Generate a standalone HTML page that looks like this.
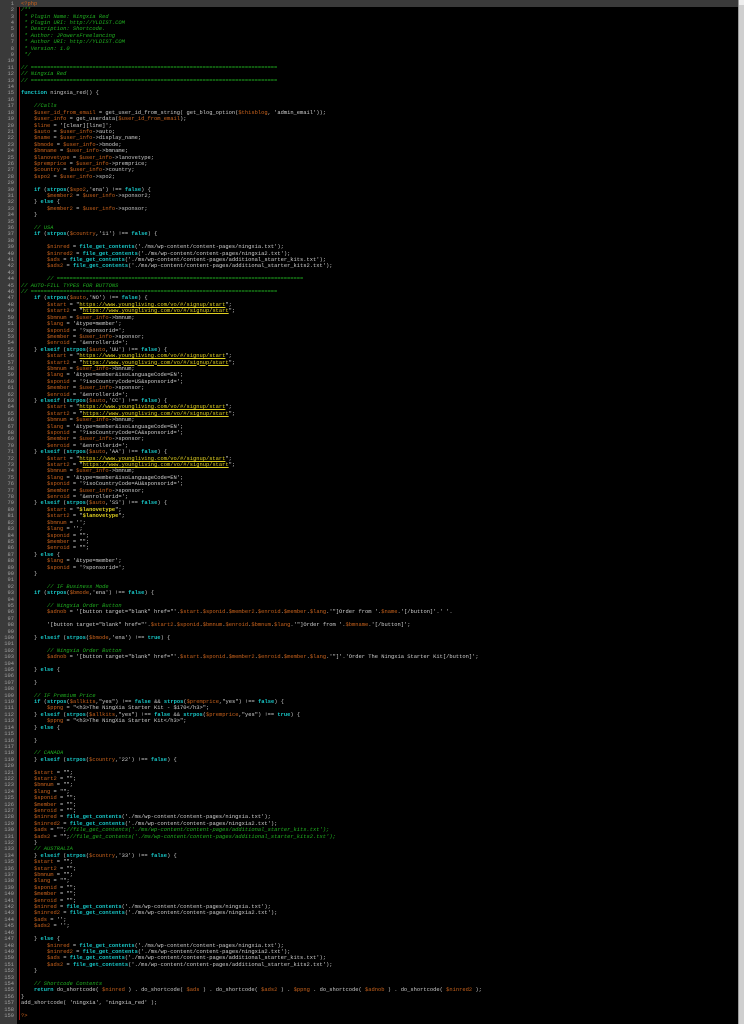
<!DOCTYPE html>
<html><head><meta charset="utf-8"><style>
html,body{margin:0;padding:0;background:#000;width:744px;height:1024px;overflow:hidden}
#g{position:absolute;left:0;top:0;width:17px;height:1024px;background:#3a3a3a}
#hl{position:absolute;left:0;top:0;width:738px;height:7px;background:#3a3a3a}
#red{position:absolute;left:19px;top:7px;width:1px;height:1013px;background:#a01010}
#sb{position:absolute;left:738px;top:0;width:6px;height:1024px;background:#cfcfcf;border-left:1px solid #999;box-sizing:border-box}
#sbt{position:absolute;left:739px;top:0;width:5px;height:5px;background:#eee}
pre{position:absolute;margin:0;font-family:"Liberation Mono",monospace;font-size:5.42px;line-height:6.4px;top:0.8px}
#n{left:0;width:14px;text-align:right;color:#a0a0a0}
#t{left:21px;color:#c8c8c8}
.v{color:#c8621c}.k{color:#18c8c8;font-weight:bold}.s{color:#d0d0d0}.u{color:#e0d020;text-decoration:underline}.c{color:#20b020;font-style:italic}.h{color:#c8621c}
</style></head><body>
<div id="g"></div><div id="hl"></div><div id="red"></div><div id="sb"></div><div id="sbt"></div>
<pre id="n">1
2
3
4
5
6
7
8
9
10
11
12
13
14
15
16
17
18
19
20
21
22
23
24
25
26
27
28
29
30
31
32
33
34
35
36
37
38
39
40
41
42
43
44
45
46
47
48
49
50
51
52
53
54
55
56
57
58
59
60
61
62
63
64
65
66
67
68
69
70
71
72
73
74
75
76
77
78
79
80
81
82
83
84
85
86
87
88
89
90
91
92
93
94
95
96
97
98
99
100
101
102
103
104
105
106
107
108
109
110
111
112
113
114
115
116
117
118
119
120
121
122
123
124
125
126
127
128
129
130
131
132
133
134
135
136
137
138
139
140
141
142
143
144
145
146
147
148
149
150
151
152
153
154
155
156
157
158
159</pre>
<pre id="t"><span class="h">&lt;?php</span>
<span class="c">/**
 * Plugin Name: Ningxia Red
 * Plugin URI: http://YLDIST.COM
 * Description: Shortcode.
 * Author: JPowersFreelancing
 * Author URI: http://YLDIST.COM
 * Version: 1.0
 */</span>

<span class="c">// ============================================================================</span>
<span class="c">// Ningxia Red</span>
<span class="c">// ============================================================================</span>

<span class="k">function</span> ningxia_red() {

    <span class="c">//Calls</span>
    <span class="v">$user_id_from_email</span> = get_user_id_from_string( get_blog_option(<span class="v">$thisblog</span>, <span class="s">'admin_email'</span>));
    <span class="v">$user_info</span> = get_userdata(<span class="v">$user_id_from_email</span>);
    <span class="v">$line</span> = <span class="s">'[clear][line]'</span>;
    <span class="v">$auto</span> = <span class="v">$user_info</span>-&gt;auto;
    <span class="v">$name</span> = <span class="v">$user_info</span>-&gt;display_name;
    <span class="v">$bmode</span> = <span class="v">$user_info</span>-&gt;bmode;
    <span class="v">$bmname</span> = <span class="v">$user_info</span>-&gt;bmname;
    <span class="v">$lanovetype</span> = <span class="v">$user_info</span>-&gt;lanovetype;
    <span class="v">$premprice</span> = <span class="v">$user_info</span>-&gt;premprice;
    <span class="v">$country</span> = <span class="v">$user_info</span>-&gt;country;
    <span class="v">$spo2</span> = <span class="v">$user_info</span>-&gt;spo2;

    <span class="k">if</span> (<span class="k">strpos</span>(<span class="v">$spo2</span>,<span class="s">'ena'</span>) !== <span class="k">false</span>) {
        <span class="v">$member2</span> = <span class="v">$user_info</span>-&gt;sponsor2;
    } <span class="k">else</span> {
        <span class="v">$member2</span> = <span class="v">$user_info</span>-&gt;sponsor;
    }

    <span class="c">// USA</span>
    <span class="k">if</span> (<span class="k">strpos</span>(<span class="v">$country</span>,<span class="s">'11'</span>) !== <span class="k">false</span>) {

        <span class="v">$ninred</span> = <span class="k">file_get_contents</span>(<span class="s">'./ms/wp-content/content-pages/ningxia.txt'</span>);
        <span class="v">$ninred2</span> = <span class="k">file_get_contents</span>(<span class="s">'./ms/wp-content/content-pages/ningxia2.txt'</span>);
        <span class="v">$ads</span> = <span class="k">file_get_contents</span>(<span class="s">'./ms/wp-content/content-pages/additional_starter_kits.txt'</span>);
        <span class="v">$ads2</span> = <span class="k">file_get_contents</span>(<span class="s">'./ms/wp-content/content-pages/additional_starter_kits2.txt'</span>);

        <span class="c">// ============================================================================</span>
<span class="c">// AUTO-FILL TYPES FOR BUTTONS</span>
<span class="c">// ============================================================================</span>
    <span class="k">if</span> (<span class="k">strpos</span>(<span class="v">$auto</span>,<span class="s">'NO'</span>) !== <span class="k">false</span>) {
        <span class="v">$start</span> = <span class="s">"</span><span class="u">https://www.youngliving.com/vo/#/signup/start</span><span class="s">"</span>;
        <span class="v">$start2</span> = <span class="s">"</span><span class="u">https://www.youngliving.com/vo/#/signup/start</span><span class="s">"</span>;
        <span class="v">$bmnum</span> = <span class="v">$user_info</span>-&gt;bmnum;
        <span class="v">$lang</span> = <span class="s">'&amp;type=member'</span>;
        <span class="v">$sponid</span> = <span class="s">'?sponsorid='</span>;
        <span class="v">$member</span> = <span class="v">$user_info</span>-&gt;sponsor;
        <span class="v">$enroid</span> = <span class="s">'&amp;enrollerid='</span>;
    } <span class="k">elseif</span> (<span class="k">strpos</span>(<span class="v">$auto</span>,<span class="s">'UU'</span>) !== <span class="k">false</span>) {
        <span class="v">$start</span> = <span class="s">"</span><span class="u">https://www.youngliving.com/vo/#/signup/start</span><span class="s">"</span>;
        <span class="v">$start2</span> = <span class="s">"</span><span class="u">https://www.youngliving.com/vo/#/signup/start</span><span class="s">"</span>;
        <span class="v">$bmnum</span> = <span class="v">$user_info</span>-&gt;bmnum;
        <span class="v">$lang</span> = <span class="s">'&amp;type=member&amp;isoLanguageCode=EN'</span>;
        <span class="v">$sponid</span> = <span class="s">'?isoCountryCode=US&amp;sponsorid='</span>;
        <span class="v">$member</span> = <span class="v">$user_info</span>-&gt;sponsor;
        <span class="v">$enroid</span> = <span class="s">'&amp;enrollerid='</span>;
    } <span class="k">elseif</span> (<span class="k">strpos</span>(<span class="v">$auto</span>,<span class="s">'CC'</span>) !== <span class="k">false</span>) {
        <span class="v">$start</span> = <span class="s">"</span><span class="u">https://www.youngliving.com/vo/#/signup/start</span><span class="s">"</span>;
        <span class="v">$start2</span> = <span class="s">"</span><span class="u">https://www.youngliving.com/vo/#/signup/start</span><span class="s">"</span>;
        <span class="v">$bmnum</span> = <span class="v">$user_info</span>-&gt;bmnum;
        <span class="v">$lang</span> = <span class="s">'&amp;type=member&amp;isoLanguageCode=EN'</span>;
        <span class="v">$sponid</span> = <span class="s">'?isoCountryCode=CA&amp;sponsorid='</span>;
        <span class="v">$member</span> = <span class="v">$user_info</span>-&gt;sponsor;
        <span class="v">$enroid</span> = <span class="s">'&amp;enrollerid='</span>;
    } <span class="k">elseif</span> (<span class="k">strpos</span>(<span class="v">$auto</span>,<span class="s">'AA'</span>) !== <span class="k">false</span>) {
        <span class="v">$start</span> = <span class="s">"</span><span class="u">https://www.youngliving.com/vo/#/signup/start</span><span class="s">"</span>;
        <span class="v">$start2</span> = <span class="s">"</span><span class="u">https://www.youngliving.com/vo/#/signup/start</span><span class="s">"</span>;
        <span class="v">$bmnum</span> = <span class="v">$user_info</span>-&gt;bmnum;
        <span class="v">$lang</span> = <span class="s">'&amp;type=member&amp;isoLanguageCode=EN'</span>;
        <span class="v">$sponid</span> = <span class="s">'?isoCountryCode=AU&amp;sponsorid='</span>;
        <span class="v">$member</span> = <span class="v">$user_info</span>-&gt;sponsor;
        <span class="v">$enroid</span> = <span class="s">'&amp;enrollerid='</span>;
    } <span class="k">elseif</span> (<span class="k">strpos</span>(<span class="v">$auto</span>,<span class="s">'SS'</span>) !== <span class="k">false</span>) {
        <span class="v">$start</span> = <span class="s">"</span><span class="u" style="text-decoration:none;font-weight:bold">$lanovetype</span><span class="s">"</span>;
        <span class="v">$start2</span> = <span class="s">"</span><span class="u" style="text-decoration:none;font-weight:bold">$lanovetype</span><span class="s">"</span>;
        <span class="v">$bmnum</span> = <span class="s">''</span>;
        <span class="v">$lang</span> = <span class="s">''</span>;
        <span class="v">$sponid</span> = <span class="s">""</span>;
        <span class="v">$member</span> = <span class="s">""</span>;
        <span class="v">$enroid</span> = <span class="s">""</span>;
    } <span class="k">else</span> {
        <span class="v">$lang</span> = <span class="s">'&amp;type=member'</span>;
        <span class="v">$sponid</span> = <span class="s">'?sponsorid='</span>;
    }

        <span class="c">// IF Business Mode</span>
    <span class="k">if</span> (<span class="k">strpos</span>(<span class="v">$bmode</span>,<span class="s">'ena'</span>) !== <span class="k">false</span>) {

        <span class="c">// Ningxia Order Button</span>
        <span class="v">$adnob</span> = <span class="s">'[button target="blank" href="'</span>.<span class="v">$start</span>.<span class="v">$sponid</span>.<span class="v">$member2</span>.<span class="v">$enroid</span>.<span class="v">$member</span>.<span class="v">$lang</span>.<span class="s">'"]Order from '</span>.<span class="v">$name</span>.<span class="s">'[/button]'</span>.<span class="s">' '</span>.

        <span class="s">'[button target="blank" href="'</span>.<span class="v">$start2</span>.<span class="v">$sponid</span>.<span class="v">$bmnum</span>.<span class="v">$enroid</span>.<span class="v">$bmnum</span>.<span class="v">$lang</span>.<span class="s">'"]Order from '</span>.<span class="v">$bmname</span>.<span class="s">'[/button]'</span>;

    } <span class="k">elseif</span> (<span class="k">strpos</span>(<span class="v">$bmode</span>,<span class="s">'ena'</span>) !== <span class="k">true</span>) {

        <span class="c">// Ningxia Order Button</span>
        <span class="v">$adnob</span> = <span class="s">'[button target="blank" href="'</span>.<span class="v">$start</span>.<span class="v">$sponid</span>.<span class="v">$member2</span>.<span class="v">$enroid</span>.<span class="v">$member</span>.<span class="v">$lang</span>.<span class="s">'"]'</span>.<span class="s">'Order The Ningxia Starter Kit[/button]'</span>;

    } <span class="k">else</span> {

    }

    <span class="c">// IF Premium Price</span>
    <span class="k">if</span> (<span class="k">strpos</span>(<span class="v">$allkits</span>,<span class="s">"yes"</span>) !== <span class="k">false</span> &amp;&amp; <span class="k">strpos</span>(<span class="v">$premprice</span>,<span class="s">"yes"</span>) !== <span class="k">false</span>) {
        <span class="v">$ppng</span> = <span class="s">"&lt;h3&gt;The NingXia Starter Kit - $170&lt;/h3&gt;"</span>;
    } <span class="k">elseif</span> (<span class="k">strpos</span>(<span class="v">$allkits</span>,<span class="s">"yes"</span>) !== <span class="k">false</span> &amp;&amp; <span class="k">strpos</span>(<span class="v">$premprice</span>,<span class="s">"yes"</span>) !== <span class="k">true</span>) {
        <span class="v">$ppng</span> = <span class="s">"&lt;h3&gt;The NingXia Starter Kit&lt;/h3&gt;"</span>;
    } <span class="k">else</span> {

    }

    <span class="c">// CANADA</span>
    } <span class="k">elseif</span> (<span class="k">strpos</span>(<span class="v">$country</span>,<span class="s">'22'</span>) !== <span class="k">false</span>) {

    <span class="v">$start</span> = <span class="s">""</span>;
    <span class="v">$start2</span> = <span class="s">""</span>;
    <span class="v">$bmnum</span> = <span class="s">""</span>;
    <span class="v">$lang</span> = <span class="s">""</span>;
    <span class="v">$sponid</span> = <span class="s">""</span>;
    <span class="v">$member</span> = <span class="s">""</span>;
    <span class="v">$enroid</span> = <span class="s">""</span>;
    <span class="v">$ninred</span> = <span class="k">file_get_contents</span>(<span class="s">'./ms/wp-content/content-pages/ningxia.txt'</span>);
    <span class="v">$ninred2</span> = <span class="k">file_get_contents</span>(<span class="s">'./ms/wp-content/content-pages/ningxia2.txt'</span>);
    <span class="v">$ads</span> = <span class="s">""</span>;<span class="c">//file_get_contents('./ms/wp-content/content-pages/additional_starter_kits.txt');</span>
    <span class="v">$ads2</span> = <span class="s">""</span>;<span class="c">//file_get_contents('./ms/wp-content/content-pages/additional_starter_kits2.txt');</span>
    }
    <span class="c">// AUSTRALIA</span>
    } <span class="k">elseif</span> (<span class="k">strpos</span>(<span class="v">$country</span>,<span class="s">'33'</span>) !== <span class="k">false</span>) {
    <span class="v">$start</span> = <span class="s">""</span>;
    <span class="v">$start2</span> = <span class="s">""</span>;
    <span class="v">$bmnum</span> = <span class="s">""</span>;
    <span class="v">$lang</span> = <span class="s">""</span>;
    <span class="v">$sponid</span> = <span class="s">""</span>;
    <span class="v">$member</span> = <span class="s">""</span>;
    <span class="v">$enroid</span> = <span class="s">""</span>;
    <span class="v">$ninred</span> = <span class="k">file_get_contents</span>(<span class="s">'./ms/wp-content/content-pages/ningxia.txt'</span>);
    <span class="v">$ninred2</span> = <span class="k">file_get_contents</span>(<span class="s">'./ms/wp-content/content-pages/ningxia2.txt'</span>);
    <span class="v">$ads</span> = <span class="s">''</span>;
    <span class="v">$ads2</span> = <span class="s">''</span>;

    } <span class="k">else</span> {
        <span class="v">$ninred</span> = <span class="k">file_get_contents</span>(<span class="s">'./ms/wp-content/content-pages/ningxia.txt'</span>);
        <span class="v">$ninred2</span> = <span class="k">file_get_contents</span>(<span class="s">'./ms/wp-content/content-pages/ningxia2.txt'</span>);
        <span class="v">$ads</span> = <span class="k">file_get_contents</span>(<span class="s">'./ms/wp-content/content-pages/additional_starter_kits.txt'</span>);
        <span class="v">$ads2</span> = <span class="k">file_get_contents</span>(<span class="s">'./ms/wp-content/content-pages/additional_starter_kits2.txt'</span>);
    }

    <span class="c">// Shortcode Contents</span>
    <span class="k">return</span> do_shortcode( <span class="v">$ninred</span> ) . do_shortcode( <span class="v">$ads</span> ) . do_shortcode( <span class="v">$ads2</span> ) . <span class="v">$ppng</span> . do_shortcode( <span class="v">$adnob</span> ) . do_shortcode( <span class="v">$ninred2</span> );
}
add_shortcode( <span class="s">'ningxia'</span>, <span class="s">'ningxia_red'</span> );

<span class="h">?&gt;</span></pre>
</body></html>
